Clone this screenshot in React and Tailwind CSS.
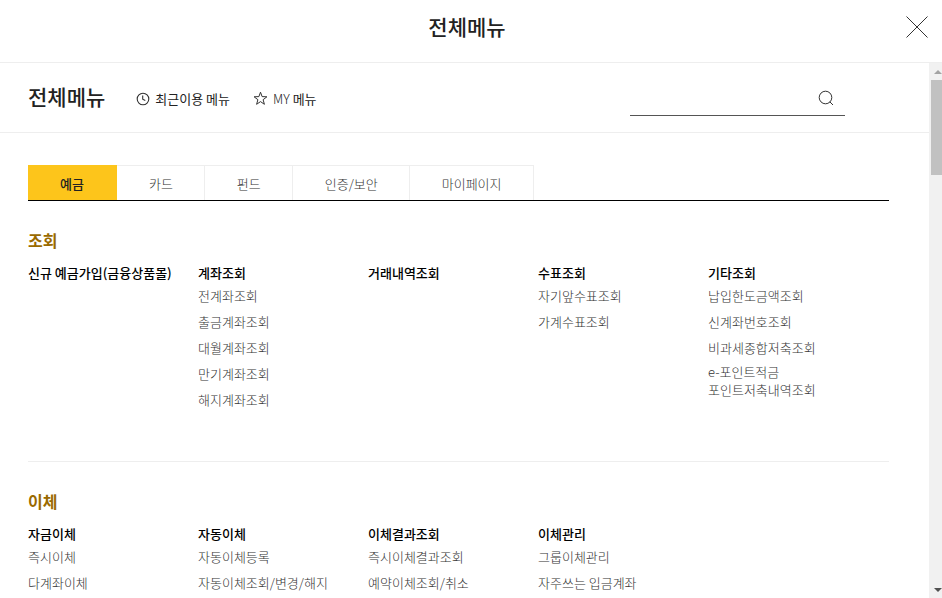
import React from "react";

const tabs = ["예금", "카드", "펀드", "인증/보안", "마이페이지"];

const sections = [
  {
    title: "조회",
    groups: [
      { name: "신규 예금가입(금융상품몰)", items: [] },
      { name: "계좌조회", items: ["전계좌조회", "출금계좌조회", "대월계좌조회", "만기계좌조회", "해지계좌조회"] },
      { name: "거래내역조회", items: [] },
      { name: "수표조회", items: ["자기앞수표조회", "가계수표조회"] },
      { name: "기타조회", items: ["납입한도금액조회", "신계좌번호조회", "비과세종합저축조회", "e-포인트적금\n포인트저축내역조회"] },
    ],
  },
  {
    title: "이체",
    groups: [
      { name: "자금이체", items: ["즉시이체", "다계좌이체"] },
      { name: "자동이체", items: ["자동이체등록", "자동이체조회/변경/해지"] },
      { name: "이체결과조회", items: ["즉시이체결과조회", "예약이체조회/취소"] },
      { name: "이체관리", items: ["그룹이체관리", "자주쓰는 입금계좌"] },
    ],
  },
];

const CloseIcon = () => (
  <svg width="22" height="22" viewBox="0 0 22 22" fill="none" stroke="#333" strokeWidth="1">
    <path d="M0.5 0.5L21.5 21.5M21.5 0.5L0.5 21.5" />
  </svg>
);

const ClockIcon = () => (
  <svg width="14" height="14" viewBox="0 0 14 14" fill="none" stroke="#333" strokeWidth="1.1">
    <circle cx="7" cy="7" r="5.8" />
    <path d="M6.7 3.6V7.2L9.3 8.6" />
  </svg>
);

const StarIcon = () => (
  <svg width="15" height="15" viewBox="0 0 15 15" fill="none" stroke="#333" strokeWidth="1">
    <path d="M7.5 1.2L9.1 5.6L13.9 5.8L10.1 8.7L11.4 13.3L7.5 10.6L3.6 13.3L4.9 8.7L1.1 5.8L5.9 5.6Z" />
  </svg>
);

const SearchIcon = () => (
  <svg width="16" height="16" viewBox="0 0 16 16" fill="none" stroke="#333" strokeWidth="1">
    <circle cx="7.5" cy="7.5" r="6.3" />
    <path d="M11.8 11.8L15 15" />
  </svg>
);

const MenuSection = ({ title, groups }) => (
  <section className="border-b border-[#eee] pt-[27px] pb-[50px]">
    <h3 className="text-base leading-6 font-bold text-[#9a6a00]">{title}</h3>
    <div className="mt-[11px] grid grid-cols-5 pr-[11px]">
      {groups.map((group) => (
        <div key={group.name}>
          <a href="#" className="block leading-5 font-medium whitespace-nowrap text-black">{group.name}</a>
          <ul className="mt-0.5 flex flex-col gap-1">
            {group.items.map((item) => (
              <li key={item} className="flex min-h-[22px] items-center">
                <a href="#" className="leading-[18px] font-light whitespace-pre text-[#333]">{item}</a>
              </li>
            ))}
          </ul>
        </div>
      ))}
    </div>
  </section>
);

const App = () => {
  return (
    <div className="flex h-screen flex-col overflow-hidden bg-white font-['Noto_Sans_CJK_KR',sans-serif] text-[13px] text-[#222]">
      <header className="grid shrink-0 grid-cols-[1fr_auto_1fr] items-center border-b border-[#eee] pt-[11px] pr-[14px] pb-[21px] pl-[6px]">
        <h1 className="col-start-2 text-[21px] leading-[30px] font-medium">전체메뉴</h1>
        <button type="button" aria-label="닫기" className="justify-self-end pt-0.5">
          <CloseIcon />
        </button>
      </header>

      <div className="flex min-h-0 flex-1">
        <main className="min-w-0 flex-1 overflow-hidden">
          <div className="flex h-[70px] items-center border-b border-[#eee] pr-[84px] pl-7">
            <h2 className="pb-1 text-[21px] leading-[30px] font-medium">전체메뉴</h2>
            <a href="#" className="ml-[31px] flex items-center gap-[5px] pt-0.5">
              <ClockIcon />
              <span className="leading-5">최근이용 메뉴</span>
            </a>
            <a href="#" className="ml-[23px] flex items-center gap-[5px] pt-0.5">
              <StarIcon />
              <span className="leading-5"><span className="font-light">MY</span> 메뉴</span>
            </a>
            <form className="ml-auto flex w-[215px] items-center border-b border-[#555] pt-[11px] pr-[11px] pb-[9px]">
              <input type="text" aria-label="메뉴 검색" className="h-4 min-w-0 flex-1 outline-none" />
              <button type="button" aria-label="검색">
                <SearchIcon />
              </button>
            </form>
          </div>

          <div className="pt-8 pr-10 pl-7">
            <nav className="flex border-b border-black">
              {tabs.map((tab, i) => (
                <button
                  key={tab}
                  type="button"
                  className={
                    i === 0
                      ? "h-[35px] border-r border-[#fdc51b] bg-[#fdc51b] px-8 pt-0.5 font-medium text-[#222]"
                      : "h-[35px] border-t border-r border-[#eee] pt-0.5 pr-[31px] pl-8 font-light text-[#333]"
                  }
                >
                  {tab}
                </button>
              ))}
            </nav>
            {sections.map((section) => (
              <MenuSection key={section.title} {...section} />
            ))}
          </div>
        </main>

        <div aria-hidden="true" className="flex w-[13px] shrink-0 flex-col justify-between bg-[#f1f1f1] pl-[2px]">
          <div>
            <div className="flex h-[17px] items-center pl-[3px]">
              <svg width="8" height="4" viewBox="0 0 8 4"><path d="M4 0L8 4H0Z" fill="#a3a3a3" /></svg>
            </div>
            <div className="h-[95px] bg-[#c1c1c1]" />
          </div>
          <div className="flex h-[17px] items-center pl-[3px]">
            <svg width="8" height="4" viewBox="0 0 8 4"><path d="M0 0H8L4 4Z" fill="#505050" /></svg>
          </div>
        </div>
      </div>
    </div>
  );
};

export default App;
